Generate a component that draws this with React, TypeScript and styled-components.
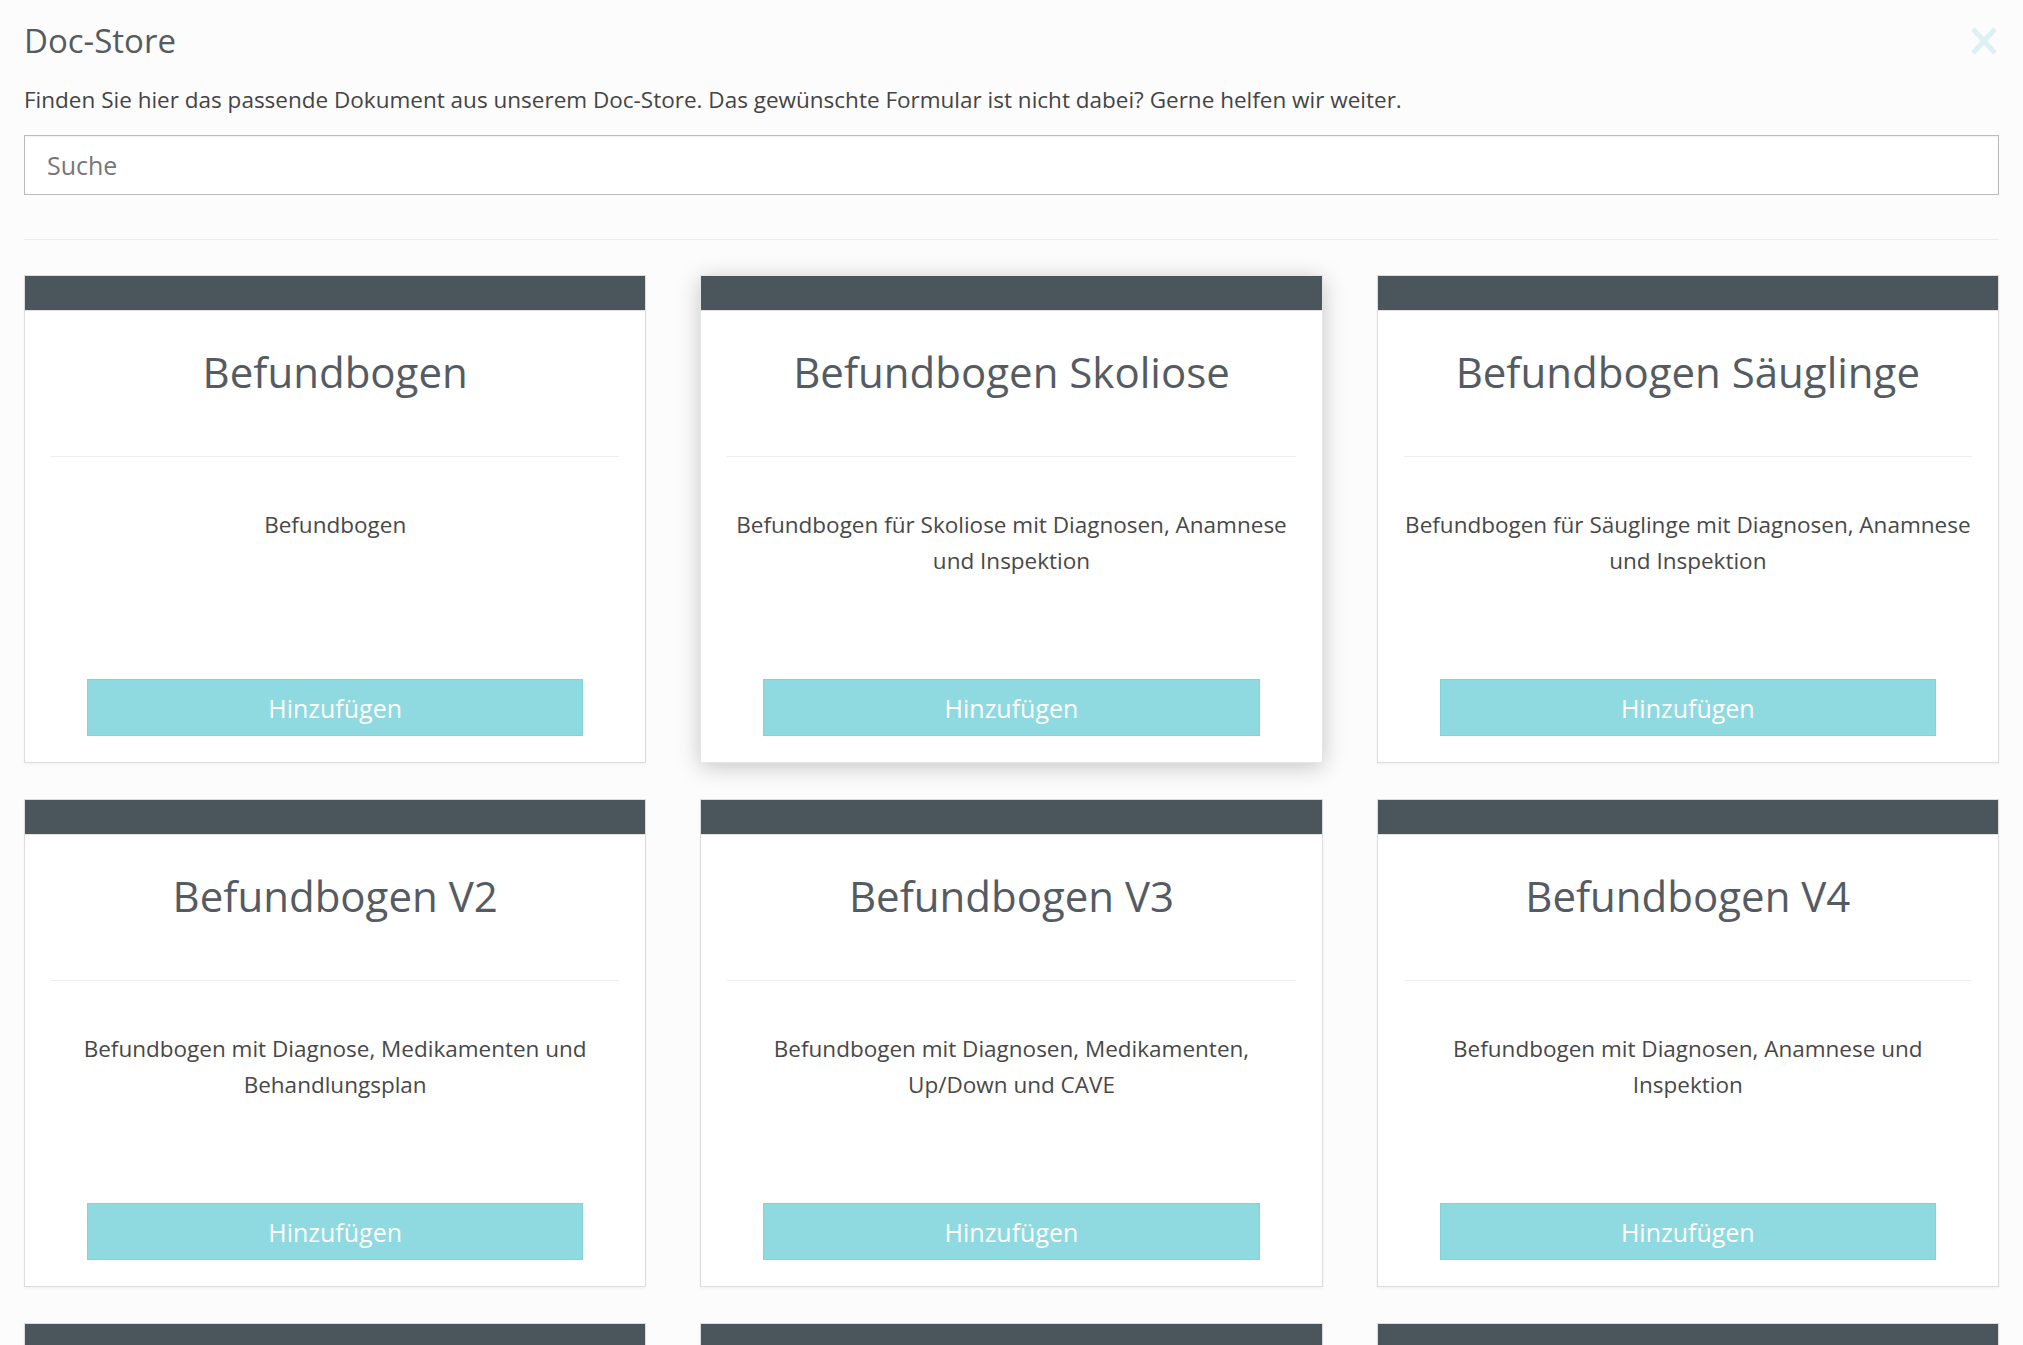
import styled, { createGlobalStyle } from 'styled-components'

interface IDocument {
	id: number
	title: string
	description: string
}

const documents: IDocument[] = [
	{ id: 1, title: 'Befundbogen', description: 'Befundbogen' },
	{
		id: 2,
		title: 'Befundbogen Skoliose',
		description: 'Befundbogen für Skoliose mit Diagnosen, Anamnese und Inspektion',
	},
	{
		id: 3,
		title: 'Befundbogen Säuglinge',
		description: 'Befundbogen für Säuglinge mit Diagnosen, Anamnese und Inspektion',
	},
	{
		id: 4,
		title: 'Befundbogen V2',
		description: 'Befundbogen mit Diagnose, Medikamenten und Behandlungsplan',
	},
	{
		id: 5,
		title: 'Befundbogen V3',
		description: 'Befundbogen mit Diagnosen, Medikamenten, Up/Down und CAVE',
	},
	{
		id: 6,
		title: 'Befundbogen V4',
		description: 'Befundbogen mit Diagnosen, Anamnese und Inspektion',
	},
	{ id: 7, title: 'Anamnesebogen', description: 'Anamnesebogen für Neupatienten' },
	{ id: 8, title: 'Behandlungsplan', description: 'Behandlungsplan mit Zielen und Terminen' },
	{ id: 9, title: 'Einverständnis', description: 'Einverständniserklärung zur Behandlung' },
]

const App = () => {
	// the second card is shown in its hover state
	const hoveredId = 2

	return (
		<>
			<GlobalStyle />
			<Page>
				<TopRow>
					<Title>Doc-Store</Title>
					<CloseButton aria-label="Schließen">
						<svg width="28" height="30" viewBox="0 0 28 30">
							<path d="M3 3 L25 27 M25 3 L3 27" stroke="currentColor" strokeWidth="5" />
						</svg>
					</CloseButton>
				</TopRow>
				<Intro>
					Finden Sie hier das passende Dokument aus unserem Doc-Store. Das gewünschte Formular ist
					nicht dabei? Gerne helfen wir weiter.
				</Intro>
				<SearchInput placeholder="Suche" autoFocus />
				<Divider />
				<CardGrid>
					{documents.map((doc) => (
						<DocCard key={`doc-${doc.id}`} $raised={doc.id === hoveredId}>
							<CardHeader />
							<CardTitleBlock>
								<CardTitle>{doc.title}</CardTitle>
							</CardTitleBlock>
							<CardText>{doc.description}</CardText>
							<AddButton>Hinzufügen</AddButton>
						</DocCard>
					))}
				</CardGrid>
			</Page>
		</>
	)
}

export default App

const GlobalStyle = createGlobalStyle`
	body {
		margin: 0;
		background: #fcfcfc;
		font-family: 'Open Sans', 'Noto Sans', sans-serif;
		color: #444;
	}
`

const Page = styled.div`
	padding: 22px 24px 40px 24px;
`

const TopRow = styled.div`
	display: flex;
	align-items: center;
	justify-content: space-between;
`

const Title = styled.h1`
	margin: 0;
	font-size: 33px;
	line-height: 38px;
	font-weight: 400;
	color: #555b61;
`

const CloseButton = styled.button`
	display: flex;
	border: none;
	background: none;
	padding: 0;
	margin-right: 1px;
	color: #dcf1f3;
	cursor: pointer;
`

const Intro = styled.p`
	margin: 25px 0 0 0;
	font-size: 22.5px;
	line-height: 30px;
	color: #444;
`

const SearchInput = styled.input`
	display: block;
	box-sizing: border-box;
	width: 100%;
	height: 60px;
	margin-top: 20px;
	padding: 0 22px;
	border: 1px solid #bbb;
	box-shadow: inset 0 1px 2px rgba(0, 0, 0, 0.06);
	background: #fff;
	font-family: 'Open Sans', sans-serif;
	font-size: 25px;
	color: #444;
	outline: none;

	&::placeholder {
		color: #777;
	}
`

const Divider = styled.hr`
	margin: 44px 0 35px 0;
	border: none;
	border-top: 1px solid #ebebeb;
`

const CardGrid = styled.div`
	display: grid;
	grid-template-columns: repeat(3, 1fr);
	column-gap: 54px;
	row-gap: 36px;
`

const DocCard = styled.div<{ $raised?: boolean }>`
	display: flex;
	flex-direction: column;
	align-items: center;
	height: 488px;
	box-sizing: border-box;
	background: #fff;
	border: 1px solid ${(p) => (p.$raised ? '#e6e6e6' : '#dcdcdc')};
	box-shadow: ${(p) =>
		p.$raised ? '0 4px 22px rgba(0, 0, 0, 0.22)' : '0 2px 3px rgba(0, 0, 0, 0.04)'};
`

const CardHeader = styled.div`
	align-self: stretch;
	height: 34px;
	background: #4a565c;
	border-bottom: 1px solid #e2e2e2;
`

const CardTitleBlock = styled.div`
	align-self: stretch;
	box-sizing: border-box;
	height: 146px;
	margin: 0 26px;
	padding-top: 36px;
	border-bottom: 1px solid #eeeeee;
	text-align: center;
`

const CardTitle = styled.h2`
	margin: 0;
	font-size: 42px;
	line-height: 49px;
	font-weight: 400;
	color: #555b62;
	white-space: nowrap;
`

const CardText = styled.p`
	margin: 50px 24px 0 24px;
	font-size: 22.5px;
	line-height: 36px;
	text-align: center;
	color: #484848;
`

const AddButton = styled.button`
	width: 80%;
	height: 57px;
	margin-top: auto;
	margin-bottom: 26px;
	border: 1px solid #83d3db;
	background: #8fd9e0;
	color: #fff;
	font-family: 'Open Sans', sans-serif;
	font-size: 25px;
	cursor: pointer;
`
